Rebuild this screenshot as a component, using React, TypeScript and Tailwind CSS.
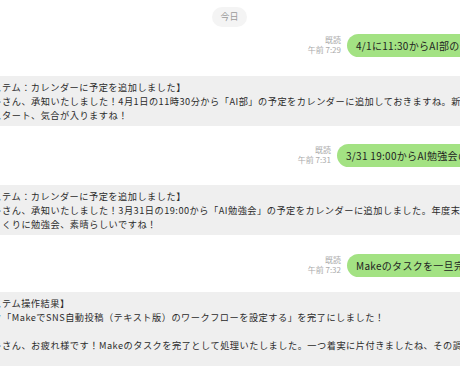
const jp = "font-['Noto_Sans_CJK_JP','Noto_Sans',sans-serif]"

type Sent = { text: string; time: string; width: string; mt: string }

const SentRow = ({ text, time, width, mt }: Sent) => (
  <div className={`flex justify-end items-end gap-[6px] px-4 ${mt}`}>
    <div className="flex flex-col items-end text-[8px] leading-[10px] text-[#ababab] pb-[2px]">
      <span>既読</span>
      <span>午前 {time}</span>
    </div>
    <div
      className={`h-[23px] ${width} flex items-center overflow-hidden rounded-full bg-[#a3e283] pl-[9px] text-[10px] tracking-[0.3px] text-[#222] whitespace-nowrap`}
    >
      {text}
    </div>
  </div>
)

const SystemBlock = ({ lines, mt }: { lines: string[]; mt: string }) => (
  <div
    className={`bg-[#efefef] px-4 pt-1 text-[9.2px] leading-[14px] tracking-[0.5px] text-[#2b2b2b] whitespace-nowrap ${mt}`}
  >
    {lines.map((line, i) => (
      <div key={i} className="h-[14px]">
        {line}
      </div>
    ))}
  </div>
)

export default function App() {
  return (
    <div className={`w-[460px] h-[380px] overflow-hidden bg-white ${jp}`}>
      <div className="w-[545px] -ml-[43px] pt-[7px]">
        <div className="flex justify-center">
          <span className="h-[20px] flex items-center rounded-full bg-[#f4f4f4] px-[8px] text-[9px] text-[#9a9a9a]">
            今日
          </span>
        </div>

        <SentRow
          mt="mt-[7px]"
          width="w-[139px]"
          time="7:29"
          text="4/1に11:30からAI部の予定を入れておいて"
        />
        <SystemBlock
          mt="mt-[19px] pb-1"
          lines={[
            '【システム：カレンダーに予定を追加しました】',
            'ユウキさん、承知いたしました！4月1日の11時30分から「AI部」の予定をカレンダーに追加しておきますね。新年',
            '度のスタート、気合が入りますね！',
          ]}
        />

        <SentRow
          mt="mt-[18px]"
          width="w-[149px]"
          time="7:31"
          text="3/31 19:00からAI勉強会の予定を追加して"
        />
        <SystemBlock
          mt="mt-[18px] pb-1"
          lines={[
            '【システム：カレンダーに予定を追加しました】',
            'ユウキさん、承知いたしました！3月31日の19:00から「AI勉強会」の予定をカレンダーに追加しました。年度末の',
            '締めくくりに勉強会、素晴らしいですね！',
          ]}
        />

        <SentRow
          mt="mt-[19px]"
          width="w-[139px]"
          time="7:32"
          text="Makeのタスクを一旦完了にして"
        />
        <SystemBlock
          mt="mt-[15px] pb-0"
          lines={[
            '【システム操作結果】',
            'タスク「MakeでSNS自動投稿（テキスト版）のワークフローを設定する」を完了にしました！',
            '',
            'ユウキさん、お疲れ様です！Makeのタスクを完了として処理いたしました。一つ着実に片付きましたね、その調',
            '子！',
          ]}
        />
      </div>
    </div>
  )
}
